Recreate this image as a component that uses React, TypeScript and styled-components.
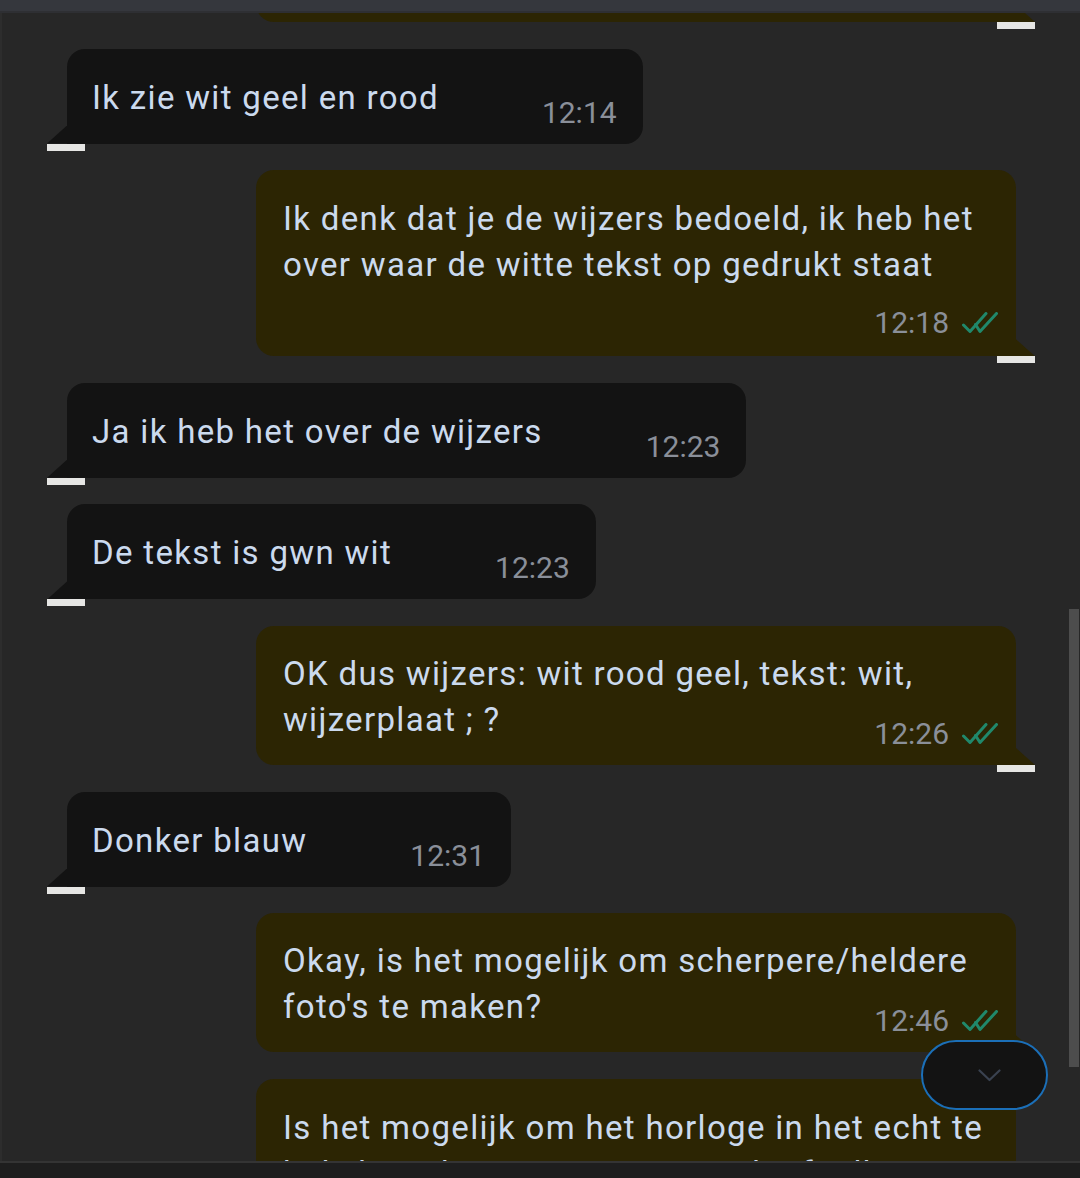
import React from 'react';
import styled, { createGlobalStyle } from 'styled-components';

const GlobalStyle = createGlobalStyle`
  html, body {
    margin: 0;
    padding: 0;
    background: #272727;
  }
  body {
    font-family: Roboto, "Noto Sans", sans-serif;
  }
`;

const Page = styled.div`
    width: 1080px;
    height: 1178px;
    display: flex;
    flex-direction: column;
    overflow: hidden;
    background: #272727;
`;

const TopBar = styled.div`
    flex: none;
    height: 11px;
    background: #35373d;
    border-bottom: 2px solid #2e2f33;
`;

const ChatArea = styled.div`
    position: relative;
    flex: 1;
    min-height: 0;
    display: flex;
    overflow: hidden;
    border-left: 2px solid #2d2d2d;
`;

const MessageList = styled.div`
    flex: 1;
    display: flex;
    flex-direction: column;
    gap: 19.6px;
    margin-top: -130px;
    padding: 0 34px 0 45px;
`;

const Row = styled.div<{ $out?: boolean }>`
    flex: none;
    display: flex;
    flex-direction: column;
    align-items: ${p => (p.$out ? 'flex-end' : 'flex-start')};
`;

const Bubble = styled.div<{ $out?: boolean }>`
    position: relative;
    margin: ${p => (p.$out ? '0 19px 0 0' : '0 0 0 20px')};
    background: ${p => (p.$out ? '#2c2503' : '#131313')};
    border-radius: ${p => (p.$out ? '18px 18px 0 18px' : '18px 18px 18px 0')};

    &::after {
        content: '';
        position: absolute;
        bottom: 0;
        background: ${p => (p.$out ? '#2c2503' : '#131313')};
        ${p =>
            p.$out
                ? 'right: -19px; width: 19px; height: 17px; clip-path: polygon(0 0, 100% 100%, 0 100%);'
                : 'left: -20px; width: 20px; height: 18px; clip-path: polygon(100% 0, 100% 100%, 0 100%);'}
    }
`;

const Underline = styled.div`
    width: 38px;
    height: 7px;
    background: #e6e6e4;
`;

const InBody = styled.div`
    display: flex;
    align-items: flex-end;
    gap: 103px;
    padding: 26px 26px 16px 25px;
`;

const OutBody = styled.div<{ $inline?: boolean }>`
    width: 715px;
    padding: ${p => (p.$inline ? '25px 18px 16px 27px' : '26px 18px 18px 27px')};
`;

const Text = styled.div<{ $in?: boolean }>`
    font-family: Roboto, "Noto Sans", sans-serif;
    font-size: 33px;
    letter-spacing: 1.32px;
    line-height: 46px;
    color: #cbdaee;
    white-space: nowrap;
    padding-bottom: ${p => (p.$in ? '7px' : '0')};
`;

const Line = styled.div`
    white-space: nowrap;
`;

const Meta = styled.div<{ $inline?: boolean }>`
    display: flex;
    justify-content: flex-end;
    align-items: center;
    gap: 13px;
    height: 30px;
    margin-top: ${p => (p.$inline ? '-24px' : '20px')};
`;

const Time = styled.span`
    font-family: Roboto, sans-serif;
    font-size: 30px;
    line-height: 30px;
    color: #8a8f99;
    white-space: nowrap;
`;

const ScrollTrack = styled.div`
    flex: none;
    width: 11px;
    display: flex;
    flex-direction: column;
`;

const ScrollThumb = styled.div`
    margin-top: 596px;
    width: 10px;
    height: 458px;
    background: #4d4d4d;
`;

const JumpButton = styled.button`
    position: absolute;
    left: 919px;
    top: 1027px;
    width: 127px;
    height: 70px;
    box-sizing: border-box;
    border: 2px solid #1b6fb8;
    border-radius: 35px;
    background: #131313;
    display: flex;
    align-items: center;
    justify-content: center;
    padding: 0 0 0 9px;
`;

const BottomBar = styled.div`
    flex: none;
    height: 15px;
    background: #1e1e1e;
    border-top: 2px solid #343434;
`;

const ReadTicks = () => (
    <svg width="36" height="22" viewBox="0 0 36 22" fill="none" stroke="#20886b" strokeWidth="3" strokeLinecap="round" strokeLinejoin="round">
        <path d="M1.5 13 L8 19.5 L24 1.5" />
        <path d="M13.5 12.5 L18 19.5 L34.5 1.5" />
    </svg>
);

const Chevron = () => (
    <svg width="23" height="13" viewBox="0 0 23 13" fill="none" stroke="#3a4250" strokeWidth="2.2" strokeLinecap="round" strokeLinejoin="round">
        <path d="M1.5 1.5 L11.5 11 L21.5 1.5" />
    </svg>
);

type Message = {
    out: boolean;
    lines: string[];
    time: string;
    inline?: boolean;
};

const messages: Message[] = [
    { out: true, lines: ['Welke kleur heeft de wijzerplaat van', 'het horloge?'], time: '12:12', inline: true },
    { out: false, lines: ['Ik zie wit geel en rood'], time: '12:14' },
    { out: true, lines: ['Ik denk dat je de wijzers bedoeld, ik heb het', 'over waar de witte tekst op gedrukt staat'], time: '12:18' },
    { out: false, lines: ['Ja ik heb het over de wijzers'], time: '12:23' },
    { out: false, lines: ['De tekst is gwn wit'], time: '12:23' },
    { out: true, lines: ['OK dus wijzers: wit rood geel, tekst: wit,', 'wijzerplaat ; ?'], time: '12:26', inline: true },
    { out: false, lines: ['Donker blauw'], time: '12:31' },
    { out: true, lines: ['Okay, is het mogelijk om scherpere/heldere', "foto's te maken?"], time: '12:46', inline: true },
    { out: true, lines: ['Is het mogelijk om het horloge in het echt te', 'bekijken, ik woon in Den Bosch of Tilburg?'], time: '12:48' },
];

const MessageRow = ({ msg }: { msg: Message }) => (
    <Row $out={msg.out}>
        <Bubble $out={msg.out}>
            {msg.out ? (
                <OutBody $inline={msg.inline}>
                    <Text>
                        {msg.lines.map(l => (
                            <Line key={l}>{l}</Line>
                        ))}
                    </Text>
                    <Meta $inline={msg.inline}>
                        <Time>{msg.time}</Time>
                        <ReadTicks />
                    </Meta>
                </OutBody>
            ) : (
                <InBody>
                    <Text $in>{msg.lines[0]}</Text>
                    <Time>{msg.time}</Time>
                </InBody>
            )}
        </Bubble>
        <Underline />
    </Row>
);

export const App = () => {
    return (
        <>
            <GlobalStyle />
            <Page>
                <TopBar />
                <ChatArea>
                    <MessageList>
                        {messages.map((m, i) => (
                            <MessageRow key={i} msg={m} />
                        ))}
                    </MessageList>
                    <ScrollTrack>
                        <ScrollThumb />
                    </ScrollTrack>
                    <JumpButton aria-label="Naar beneden">
                        <Chevron />
                    </JumpButton>
                </ChatArea>
                <BottomBar />
            </Page>
        </>
    );
};

export default App;
